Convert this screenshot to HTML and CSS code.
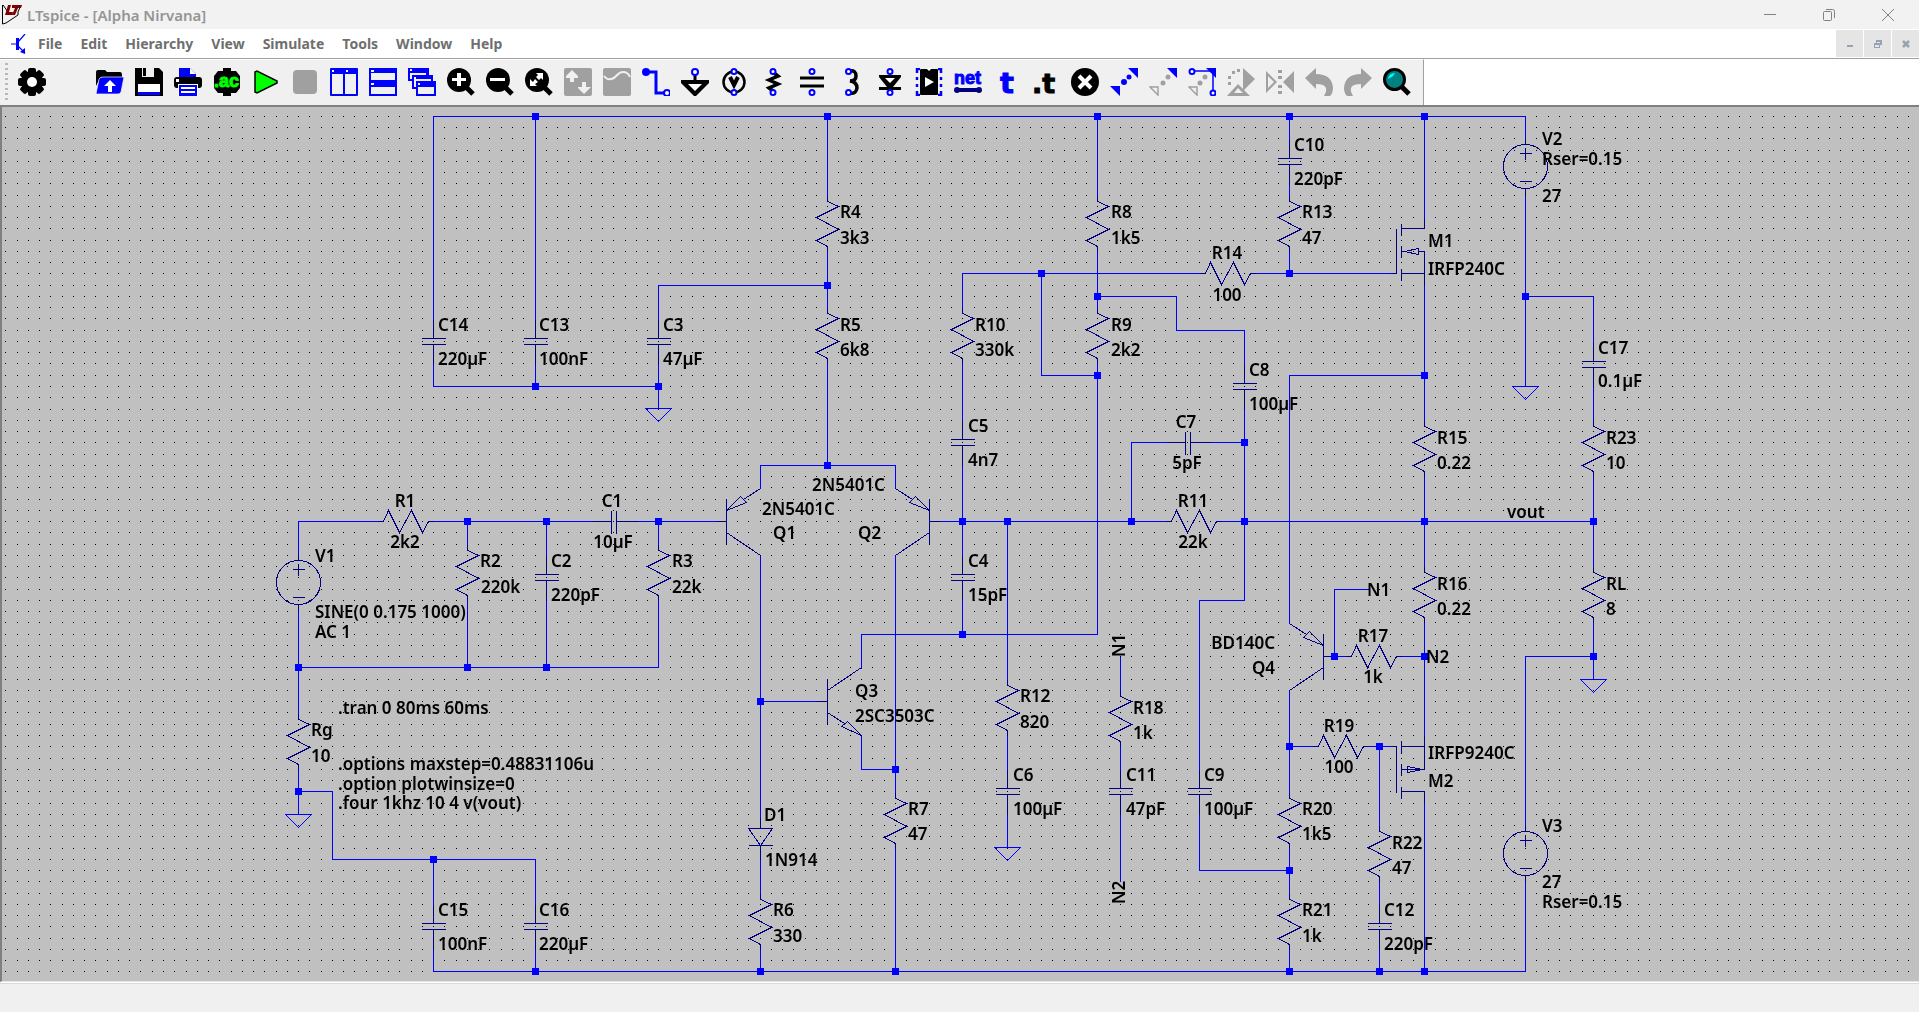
FILE: index.html
```html
<!DOCTYPE html>
<html lang="en">
<head>
<meta charset="utf-8">
<title>LTspice - [Alpha Nirvana]</title>
<link rel="stylesheet" href="styles.css">
<script src="grid.js" defer></script>
</head>
<body>
<header class="titlebar">
  <svg class="app-icon" viewBox="0 0 20 20" aria-hidden="true"><path d="M.5 0V19L4 18L16 10V7L19 0" fill="none" stroke="#000" stroke-width="1"/><path d="M1 0L6 7" stroke="#000"/><path d="M6 0H9L7 7H11L10 10H3ZM10 0H20L19 3H16L13 10H10L13 3H10Z" fill="#800000"/></svg>
  <h1 class="title">LTspice - [Alpha Nirvana]</h1>
  <div class="window-buttons">
    <button class="window-button" aria-label="Minimize"><svg width="14" height="14" viewBox="0 0 14 14"><path d="M1 6.500H13" class="thin"/></svg></button>
    <button class="window-button" aria-label="Restore"><svg width="14" height="14" viewBox="0 0 14 14"><rect x="1.500" y="3.500" width="8" height="9" rx="1" class="thin"/><path d="M4 1.500H10.500Q12.500 1.500 12.500 3.500V10" class="thin"/></svg></button>
    <button class="window-button" aria-label="Close"><svg width="14" height="14" viewBox="0 0 14 14"><path d="M1 1L13 13M13 1L1 13" class="thin"/></svg></button>
  </div>
</header>

<nav class="menubar" aria-label="Main menu">
  <svg class="doc-icon" viewBox="0 0 16 20" aria-hidden="true"><path d="M0 10H7M7 8L14 0M7 12L14 19" stroke="#00f" stroke-width="1.200" fill="none"/><path d="M5 4H8V16H5ZM9 18L14 20V14Z" fill="#00f"/></svg>
  <button class="menu">File</button>
  <button class="menu">Edit</button>
  <button class="menu">Hierarchy</button>
  <button class="menu">View</button>
  <button class="menu">Simulate</button>
  <button class="menu">Tools</button>
  <button class="menu">Window</button>
  <button class="menu">Help</button>
  <div class="child-buttons">
    <button class="child-button" aria-label="Minimize document"><svg width="10" height="10" viewBox="0 0 10 10"><path d="M2 6H8V8H2Z"/></svg></button>
    <button class="child-button" aria-label="Restore document"><svg width="10" height="10" viewBox="0 0 10 10"><path d="M3 1H9V6H7V3H4V4H3ZM1 4H7V9H1ZM2 6V8H6V6Z" fill-rule="evenodd"/></svg></button>
    <button class="child-button" aria-label="Close document"><svg width="10" height="10" viewBox="0 0 10 10"><path d="M2 2L8 8M8 2L2 8" stroke="#95a3b3" stroke-width="2.500"/></svg></button>
  </div>
</nav>

<div class="toolbar-row">
  <div class="toolbar" role="toolbar" aria-label="Main toolbar">
    <span class="grip"></span>
    <button class="tool settings" aria-label="Settings"><svg viewBox="0 0 28 28"><circle cx="14" cy="14" r="11"/><rect x="10" y="0" width="8" height="28" rx="2"/><rect x="10" y="0" width="8" height="28" rx="2" transform="rotate(45 14 14)"/><rect x="10" y="0" width="8" height="28" rx="2" transform="rotate(90 14 14)"/><rect x="10" y="0" width="8" height="28" rx="2" transform="rotate(135 14 14)"/><circle cx="14" cy="14" r="5" fill="#fff"/></svg></button>
    <button class="tool" aria-label="Open"><svg viewBox="0 0 28 28"><path d="M0 18V4Q0 2 2 2H9L11 4H24Q26 4 26 7V9H6Q4 9 3 12Z"/><path d="M3 11Q4 9 7 9H28L25 24Q24 26 22 26H0Z" fill="#00f" stroke="#f0f0f0" stroke-width=".7"/><path d="M14 12L20 18H16V24H12V18H8Z" fill="#fff"/></svg></button>
    <button class="tool" aria-label="Save"><svg viewBox="0 0 28 28"><path d="M0 0H7V9H19V0H24L28 4V28H0Z"/><path d="M8 0H11V8H8Z"/><path d="M3 16H25V24H3Z" fill="#fff"/><path d="M3 24H25V27H3Z" fill="#00f"/></svg></button>
    <button class="tool" aria-label="Print"><svg viewBox="0 0 28 28"><path d="M5 0H16L22 6V9H5Z" fill="#00f"/><path d="M16 0V6H22Z" fill="#fff"/><rect x="0" y="9" width="28" height="11" rx="3"/><path d="M2 11H5V14H2Z" fill="#fff"/><path d="M4 16H24V28H4Z" fill="#fff"/><path d="M5 17H23V28H5Z" fill="#00f"/><path d="M7 19H21V21H7ZM7 23H21V25H7Z" fill="#fff"/></svg></button>
    <button class="tool" aria-label="AC analysis"><svg viewBox="0 0 28 28"><path d="M10 0H18V3H23L27 8V20L23 25H18V28H10V25H5L1 20V8L5 3H10Z"/><text x="1" y="19" class="icon-word" font-size="18" fill="#0f0" stroke="#0f0">.ac</text></svg></button>
    <button class="tool" aria-label="Run"><svg viewBox="0 0 28 28"><path d="M3 4L5 3L25 13V15L5 25L3 24Z" fill="#0f0" stroke="#000" stroke-width="1.500"/></svg></button>
    <button class="tool" aria-label="Halt" disabled><svg viewBox="0 0 28 28"><rect x="2" y="2" width="24" height="24" rx="4" fill="#a0a0a0"/></svg></button>
    <button class="tool" aria-label="Tile vertically"><svg viewBox="0 0 28 28"><rect width="28" height="28" rx="1" fill="#00f"/><path d="M2 6H13V26H2ZM15 6H26V26H15ZM2 2H4V4H2ZM16 2H18V4H16Z" fill="#f0f0f0"/></svg></button>
    <button class="tool" aria-label="Tile horizontally"><svg viewBox="0 0 28 28"><path d="M0 0H28V28H0Z" fill="#00f"/><path d="M2 5H26V12H2ZM2 19H26V26H2ZM2 2H5V4H2ZM2 15H5V17H2Z" fill="#f0f0f0"/></svg></button>
    <button class="tool" aria-label="Cascade"><svg viewBox="0 0 28 28"><path d="M0 0H21V7H25V13H28V28H8V21H4V13H0Z" fill="#00f"/><path d="M2 5H18V7H4V11H2ZM6 11H23V13H8V19H6ZM10 19H26V26H10ZM2 1H4V3H2ZM6 9H8V11H6ZM10 15H12V17H10Z" fill="#f0f0f0"/></svg></button>
    <button class="tool" aria-label="Zoom in"><svg viewBox="0 0 28 28"><circle cx="12" cy="12" r="12"/><path d="M18 18L26 26" stroke="#000" stroke-width="5"/><path d="M10 5H14V10H19V13H14V18H10V13H5V10H10Z" fill="#fff"/></svg></button>
    <button class="tool" aria-label="Zoom out"><svg viewBox="0 0 28 28"><circle cx="12" cy="12" r="12"/><path d="M18 18L26 26" stroke="#000" stroke-width="5"/><path d="M4 10H19V13H4Z" fill="#fff"/></svg></button>
    <button class="tool" aria-label="Zoom to fit"><svg viewBox="0 0 28 28"><circle cx="12" cy="12" r="12"/><path d="M18 18L26 26" stroke="#000" stroke-width="5"/><path d="M11 5H18V12L16 10L14 12L11 9L13 7ZM5 11L8 14L10 11L13 14L10 16L12 18H5Z" fill="#fff"/></svg></button>
    <button class="tool" aria-label="Autorange" disabled><svg viewBox="0 0 28 28"><rect width="28" height="28" rx="2" fill="#a0a0a0"/><path d="M8 2L14 8V10H10V14H6V10H2V8ZM18 14H22V19H27L20 26L14 20V19H18Z" fill="#f0f0f0"/></svg></button>
    <button class="tool" aria-label="Plot" disabled><svg viewBox="0 0 28 28"><rect width="28" height="28" rx="2" fill="#a0a0a0"/><path d="M1 8Q4 12 8 11C13 11 14 4 20 4Q25 4 27 9" fill="none" stroke="#f0f0f0" stroke-width="2"/></svg></button>
    <button class="tool" aria-label="Wire"><svg viewBox="0 0 28 28"><path d="M4 4H14V25H23" fill="none" stroke="#00f" stroke-width="3"/><circle cx="4" cy="4" r="4" fill="#00f"/><circle cx="25" cy="25" r="3" class="pin"/></svg></button>
    <button class="tool" aria-label="Ground"><svg viewBox="0 0 28 28"><path d="M14 6V14" stroke="#000" stroke-width="3"/><path d="M0 12H28V15L15 28H13L0 15Z"/><path d="M7 16H21L14 23Z" fill="#fff"/><circle cx="14" cy="4" r="3" class="pin"/></svg></button>
    <button class="tool" aria-label="Voltage source"><svg viewBox="0 0 28 28"><circle cx="14" cy="14" r="10.500" fill="none" stroke="#000" stroke-width="2.500"/><path d="M10 9L14 17L18 9" fill="none" stroke="#000" stroke-width="4"/><circle cx="14" cy="3.500" r="2.500" class="pin"/><circle cx="14" cy="24.500" r="2.500" class="pin"/></svg></button>
    <button class="tool" aria-label="Resistor"><svg viewBox="0 0 28 28"><path d="M15 5L19 8L10 12L19 16L10 20L14 23" fill="none" stroke="#000" stroke-width="3.500"/><circle cx="14" cy="3.500" r="2.500" class="pin"/><circle cx="14" cy="24.500" r="2.500" class="pin"/></svg></button>
    <button class="tool" aria-label="Capacitor"><svg viewBox="0 0 28 28"><path d="M2 10H26M2 18H26" stroke="#000" stroke-width="3"/><circle cx="14" cy="3.500" r="2.500" class="pin"/><circle cx="14" cy="24.500" r="2.500" class="pin"/></svg></button>
    <button class="tool" aria-label="Inductor"><svg viewBox="0 0 28 28"><path d="M13 3Q19 2 19 8Q19 13 13 13Q20 14 20 20Q19 26 14 25" fill="none" stroke="#000" stroke-width="3.500"/><circle cx="11.500" cy="3.500" r="2.500" class="pin"/><circle cx="11.500" cy="24.500" r="2.500" class="pin"/></svg></button>
    <button class="tool" aria-label="Diode"><svg viewBox="0 0 28 28"><path d="M3 7H25V9L17 19H25V22H3V19H11L3 9Z"/><path d="M9 10H19L14 15Z" fill="#fff"/><circle cx="14" cy="3.500" r="2.500" class="pin"/><circle cx="14" cy="24.500" r="2.500" class="pin"/></svg></button>
    <button class="tool" aria-label="Component"><svg viewBox="0 0 28 28"><rect x="5" y="1" width="18" height="26" rx="1"/><path d="M11 0H17L14 3ZM10 9V19L19 14Z" fill="#fff"/><path d="M2 5V1H5M23 1H26V5M2 9V12M26 9V12M2 16V19M26 16V19M2 23V27H5M23 27H26V23" fill="none" stroke="#00f" stroke-width="2.500"/></svg></button>
    <button class="tool" aria-label="Label net"><svg viewBox="0 0 28 28"><text x="0" y="16" class="icon-word" font-size="18" fill="#00f" stroke="#00f">net</text><path d="M3 22H25" stroke="#000080" stroke-width="4"/><circle cx="3" cy="22" r="3" fill="#000080"/><circle cx="25" cy="22" r="3" fill="#000080"/></svg></button>
    <button class="tool" aria-label="Text"><svg viewBox="0 0 28 28"><text x="7" y="25" class="icon-letter" font-size="29" fill="#00f" stroke="#00f">t</text></svg></button>
    <button class="tool" aria-label="SPICE directive"><svg viewBox="0 0 28 28"><text x="0" y="25" class="icon-letter" font-size="27" stroke="#000">.t</text></svg></button>
    <button class="tool" aria-label="Delete"><svg viewBox="0 0 28 28"><circle cx="14" cy="14" r="14"/><path d="M8 8L20 20M20 8L8 20" stroke="#fff" stroke-width="4"/></svg></button>
    <button class="tool" aria-label="Move"><svg viewBox="0 0 28 28"><path d="M18 0H28V10ZM0 18H10V28Z" fill="#00f"/><circle cx="8" cy="20" r="2" fill="#00f"/><circle cx="14" cy="14" r="3" fill="#00f"/><circle cx="19" cy="9" r="2.500" fill="#00f"/></svg></button>
    <button class="tool" aria-label="Duplicate"><svg viewBox="0 0 28 28"><path d="M18 0H28V10Z" fill="#00f"/><path d="M1 19H9V27Z" fill="none" stroke="#a0a0a0" stroke-width="1.500"/><circle cx="14" cy="15" r="2.500" fill="#a0a0a0"/><circle cx="19" cy="9" r="2.500" fill="#a0a0a0"/></svg></button>
    <button class="tool" aria-label="Drag"><svg viewBox="0 0 28 28"><path d="M18 0H28V10Z" fill="#00f"/><path d="M1 19H9V27Z" fill="none" stroke="#a0a0a0" stroke-width="1.500"/><circle cx="12" cy="15" r="2.500" fill="#a0a0a0"/><circle cx="17" cy="9" r="2.500" fill="#a0a0a0"/><path d="M6 3H25V22" fill="none" stroke="#00f" stroke-width="1.500"/><circle cx="4" cy="3.500" r="2.500" class="pin"/><circle cx="25" cy="25" r="2.500" class="pin"/></svg></button>
    <button class="tool" aria-label="Rotate" disabled><svg viewBox="0 0 28 28"><g fill="#a0a0a0"><path d="M16 0L28 11L16 23Z"/><path d="M11 16L23 28H0ZM11 20L7 25H16Z" fill-rule="evenodd"/><path d="M10 1H13V4H10ZM5 3H8V6H5ZM1 8H4V11H1ZM1 14H4V17H1Z"/></g></svg></button>
    <button class="tool" aria-label="Mirror" disabled><svg viewBox="0 0 28 28"><g fill="#a0a0a0"><path d="M28 3V25L17 14ZM0 3L11 14L0 25ZM2 8V20L8 14Z" fill-rule="evenodd"/><path d="M12 2H16V5H12ZM12 8H16V11H12ZM12 17H16V20H12ZM12 23H16V26H12Z"/></g></svg></button>
    <button class="tool" aria-label="Undo" disabled><svg viewBox="0 0 28 28"><path d="M11 0V6Q27 6 28 20Q28 25 25 28H19Q26 16 11 16V21L0 10Z" fill="#a0a0a0"/></svg></button>
    <button class="tool" aria-label="Redo" disabled><svg viewBox="0 0 28 28"><path d="M17 0V6Q1 6 0 20Q0 25 3 28H9Q2 16 17 16V21L28 10Z" fill="#a0a0a0"/></svg></button>
    <button class="tool" aria-label="Search"><svg viewBox="0 0 28 28"><path d="M18 18L26 26" stroke="#000" stroke-width="5"/><circle cx="11.500" cy="11.500" r="10" fill="#008080" stroke="#000" stroke-width="3"/><path d="M5 11Q6 5 12 5L10 8L7 10Z" fill="#0ff"/></svg></button>
  </div>
</div>

<main class="workspace">
  <canvas class="grid"></canvas>
  <svg class="schematic" width="1917" height="874" viewBox="2 107 1917 874" role="img" aria-label="Alpha Nirvana amplifier schematic">
    <defs>
      <path id="res" d="M0 0V6L11 11L-11 22L11 34L-11 45L0 51V56"/>
      <path id="cap" d="M0 0V19M-12 19H12M-12 25H12M0 25V45"/>
      <path id="hcap" d="M0 0H19M19 -11V12M24 -11V12M24 0H45"/>
      <path id="src" d="M0 0V6M0 50V56M-6 15H6M0 9V21M-6 43H6M22 28A22 22 0 1 1 -22 28A22 22 0 1 1 22 28"/>
      <path id="pnp" d="M0 -23V22M-11 0H0M0 11L34 34M34 -33L17 -22M14 -25L20 -19L0 -11Z"/>
      <path id="npn" d="M0 -23V22M-11 0H0M0 -11L34 -34M0 11L17 22M20 20L14 25L34 34Z"/>
      <path id="gnd" d="M-13 0H13L0 13Z"/>
      <path id="dot" d="M-4 -4H3V3H-4Z"/>
    </defs>
    <g transform="translate(.5 .5)" shape-rendering="crispEdges">
      <path class="wire" d="M433 319V116H1525V139M433 364V386H658M535 116V319M535 364V386M658 319V285H827M658 364V408M827 116V195M827 251V307M827 363V465M760 488V465H895V488
        M760 555V817M760 701H816M861 668V634H1097V363M861 735V769H895M895 555V792M895 848V971M760 859V893M760 949V971
        M298 554V521H378M433 521H592M636 521H715M298 610V713M298 667H658V600M467 521V544M467 600V667M546 521V555M546 600V667M658 521V544
        M298 769V814M298 791H332V859H535V904M433 859V904M433 949V971H1525V881M535 949V971
        M1097 116V195M1097 251V307M1199 273H962V307M1041 273V375H1097M962 363V420M962 465V555M962 600V634
        M1097 296H1176V330H1244V364M1244 409V600H1199V769M1199 814V870H1289M1131 521V442H1166M1210 442H1244M940 521H1165M1221 521H1593
        M1007 521V679M1007 735V769M1007 814V847M1120 656V690M1120 746V769M1120 814V881
        M1289 116V139M1289 184V195M1289 251V273M1255 273H1390M1424 375H1289V623M1289 690V792M1289 848V893M1289 949V971
        M1424 116V218M1424 285V420M1424 476V566M1424 622V735M1424 803V971M1368 589H1334V656H1345M1401 656H1424M1289 746H1312M1368 746H1390M1379 746V825M1379 881V904M1379 949V971
        M1525 195V386M1525 296H1593V342M1593 387V420M1593 476V566M1593 622V679M1525 825V656H1593"/>
      <g class="wire"><use href="#gnd" x="658" y="408"/><use href="#gnd" x="298" y="814"/><use href="#gnd" x="1007" y="847"/><use href="#gnd" x="1525" y="386"/><use href="#gnd" x="1593" y="679"/></g>
      <g class="part">
        <use href="#cap" x="433" y="319"/><use href="#cap" x="535" y="319"/><use href="#cap" x="658" y="319"/><use href="#cap" x="546" y="555"/><use href="#cap" x="433" y="904"/><use href="#cap" x="535" y="904"/>
        <use href="#cap" x="962" y="420"/><use href="#cap" x="962" y="555"/><use href="#cap" x="1007" y="769"/><use href="#cap" x="1120" y="769"/><use href="#cap" x="1199" y="769"/><use href="#cap" x="1244" y="364"/><use href="#cap" x="1289" y="139"/><use href="#cap" x="1379" y="904"/><use href="#cap" x="1593" y="342"/>
        <use href="#hcap" x="592" y="521"/><use href="#hcap" x="1166" y="442"/>
        <use href="#res" x="827" y="195"/><use href="#res" x="827" y="307"/><use href="#res" x="467" y="544"/><use href="#res" x="658" y="544"/><use href="#res" x="298" y="713"/><use href="#res" x="760" y="893"/><use href="#res" x="895" y="792"/><use href="#res" x="1097" y="195"/><use href="#res" x="1097" y="307"/><use href="#res" x="962" y="307"/><use href="#res" x="1007" y="679"/><use href="#res" x="1120" y="690"/><use href="#res" x="1289" y="195"/><use href="#res" x="1289" y="792"/><use href="#res" x="1289" y="893"/><use href="#res" x="1379" y="825"/><use href="#res" x="1424" y="420"/><use href="#res" x="1424" y="566"/><use href="#res" x="1593" y="420"/><use href="#res" x="1593" y="566"/>
        <use href="#res" transform="translate(377 521) rotate(-90)"/><use href="#res" transform="translate(1199 273) rotate(-90)"/><use href="#res" transform="translate(1165 521) rotate(-90)"/><use href="#res" transform="translate(1345 656) rotate(-90)"/><use href="#res" transform="translate(1312 746) rotate(-90)"/>
        <use href="#src" x="298" y="554"/><use href="#src" x="1525" y="138"/><use href="#src" x="1525" y="825"/>
        <use href="#pnp" x="726" y="521"/><use href="#pnp" transform="translate(929 521) scale(-1 1)"/><use href="#pnp" transform="translate(1323 656) scale(-1 1)"/><use href="#npn" x="827" y="701"/>
        <path d="M760 817V828M748 828H772L760 845ZM748 845H772M760 845V859"/>
        <path d="M1390 273H1396V228M1401 223V235M1401 245V257M1401 268V280M1424 218V228H1401M1401 273H1424M1401 251H1404M1424 285V251H1418M1404 251L1418 248V254Z"/>
        <path d="M1390 746H1396V792M1401 740V753M1401 763V775M1401 786V798M1401 746H1424M1424 735V769H1401M1407 766V772L1422 769ZM1401 791H1424V803"/>
      </g>
      <g class="junction">
        <use href="#dot" x="535" y="116"/><use href="#dot" x="827" y="116"/><use href="#dot" x="1097" y="116"/><use href="#dot" x="1289" y="116"/><use href="#dot" x="1424" y="116"/>
        <use href="#dot" x="827" y="285"/><use href="#dot" x="535" y="386"/><use href="#dot" x="658" y="386"/><use href="#dot" x="827" y="465"/><use href="#dot" x="467" y="521"/><use href="#dot" x="546" y="521"/><use href="#dot" x="658" y="521"/>
        <use href="#dot" x="298" y="667"/><use href="#dot" x="467" y="667"/><use href="#dot" x="546" y="667"/><use href="#dot" x="298" y="791"/><use href="#dot" x="433" y="859"/><use href="#dot" x="535" y="971"/><use href="#dot" x="760" y="971"/><use href="#dot" x="895" y="971"/>
        <use href="#dot" x="760" y="701"/><use href="#dot" x="895" y="769"/><use href="#dot" x="962" y="634"/><use href="#dot" x="962" y="521"/><use href="#dot" x="1007" y="521"/><use href="#dot" x="1131" y="521"/><use href="#dot" x="1244" y="521"/><use href="#dot" x="1424" y="521"/><use href="#dot" x="1593" y="521"/>
        <use href="#dot" x="1041" y="273"/><use href="#dot" x="1097" y="296"/><use href="#dot" x="1097" y="375"/><use href="#dot" x="1244" y="442"/><use href="#dot" x="1289" y="273"/><use href="#dot" x="1424" y="375"/><use href="#dot" x="1525" y="296"/>
        <use href="#dot" x="1334" y="656"/><use href="#dot" x="1424" y="656"/><use href="#dot" x="1593" y="656"/><use href="#dot" x="1289" y="746"/><use href="#dot" x="1379" y="746"/><use href="#dot" x="1289" y="870"/><use href="#dot" x="1289" y="971"/><use href="#dot" x="1379" y="971"/><use href="#dot" x="1424" y="971"/>
      </g>
    </g>
    <g class="label">
      <text x="438" y="331">C14</text><text x="438" y="365">220µF</text>
      <text x="539" y="331">C13</text><text x="539" y="365">100nF</text>
      <text x="663" y="331">C3</text><text x="663" y="365">47µF</text>
      <text x="840" y="218">R4</text><text x="840" y="244">3k3</text>
      <text x="840" y="331">R5</text><text x="840" y="356">6k8</text>
      <text x="405" y="507" class="mid">R1</text><text x="405" y="548" class="mid">2k2</text>
      <text x="315" y="562">V1</text><text x="315" y="618">SINE(0 0.175 1000)</text><text x="315" y="638">AC 1</text>
      <text x="480" y="567">R2</text><text x="481" y="593">220k</text>
      <text x="551" y="567">C2</text><text x="551" y="601">220pF</text>
      <text x="612" y="507" class="mid">C1</text><text x="613" y="548" class="mid">10µF</text>
      <text x="672" y="567">R3</text><text x="672" y="593">22k</text>
      <text x="338" y="714">.tran 0 80ms 60ms</text>
      <text x="311" y="736">Rg</text><text x="311" y="762">10</text>
      <text x="338" y="770">.options maxstep=0.48831106u</text><text x="338" y="790">.option plotwinsize=0</text><text x="338" y="809">.four 1khz 10 4 v(vout)</text>
      <text x="438" y="916">C15</text><text x="438" y="950">100nF</text>
      <text x="539" y="916">C16</text><text x="539" y="950">220µF</text>
      <text x="812" y="491">2N5401C</text><text x="762" y="515">2N5401C</text><text x="773" y="539">Q1</text><text x="858" y="539">Q2</text>
      <text x="855" y="697">Q3</text><text x="855" y="722">2SC3503C</text>
      <text x="764" y="821">D1</text><text x="765" y="866">1N914</text>
      <text x="773" y="916">R6</text><text x="773" y="942">330</text>
      <text x="908" y="815">R7</text><text x="908" y="840">47</text>
      <text x="968" y="432">C5</text><text x="968" y="466">4n7</text>
      <text x="968" y="567">C4</text><text x="968" y="601">15pF</text>
      <text x="975" y="331">R10</text><text x="975" y="356">330k</text>
      <text x="1111" y="218">R8</text><text x="1111" y="244">1k5</text>
      <text x="1111" y="331">R9</text><text x="1111" y="356">2k2</text>
      <text x="1227" y="259" class="mid">R14</text><text x="1227" y="301" class="mid">100</text>
      <text x="1294" y="151">C10</text><text x="1294" y="185">220pF</text>
      <text x="1302" y="218">R13</text><text x="1302" y="244">47</text>
      <text x="1249" y="376">C8</text><text x="1249" y="410">100µF</text>
      <text x="1186" y="428" class="mid">C7</text><text x="1187" y="469" class="mid">5pF</text>
      <text x="1193" y="507" class="mid">R11</text><text x="1193" y="548" class="mid">22k</text>
      <text x="1020" y="702">R12</text><text x="1020" y="728">820</text>
      <text x="1013" y="781">C6</text><text x="1013" y="815">100µF</text>
      <text x="1133" y="714">R18</text><text x="1133" y="739">1k</text>
      <text x="1126" y="781">C11</text><text x="1126" y="815">47pF</text>
      <text transform="translate(1125 657) rotate(-90)">N1</text><text transform="translate(1125 904) rotate(-90)">N2</text>
      <text x="1204" y="781">C9</text><text x="1204" y="815">100µF</text>
      <text x="1275" y="649" class="end">BD140C</text><text x="1275" y="674" class="end">Q4</text>
      <text x="1428" y="247">M1</text><text x="1428" y="275">IRFP240C</text>
      <text x="1542" y="145">V2</text><text x="1542" y="165">Rser=0.15</text><text x="1542" y="202">27</text>
      <text x="1598" y="354">C17</text><text x="1598" y="387">0.1µF</text>
      <text x="1437" y="444">R15</text><text x="1437" y="469">0.22</text>
      <text x="1606" y="444">R23</text><text x="1606" y="469">10</text>
      <text x="1507" y="518">vout</text>
      <text x="1437" y="590">R16</text><text x="1437" y="615">0.22</text>
      <text x="1606" y="590">RL</text><text x="1606" y="615">8</text>
      <text x="1367" y="596">N1</text><text x="1426" y="663">N2</text>
      <text x="1373" y="642" class="mid">R17</text><text x="1373" y="683" class="mid">1k</text>
      <text x="1339" y="732" class="mid">R19</text><text x="1339" y="773" class="mid">100</text>
      <text x="1428" y="759">IRFP9240C</text><text x="1428" y="787">M2</text>
      <text x="1302" y="815">R20</text><text x="1302" y="840">1k5</text>
      <text x="1302" y="916">R21</text><text x="1302" y="942">1k</text>
      <text x="1392" y="849">R22</text><text x="1392" y="874">47</text>
      <text x="1384" y="916">C12</text><text x="1384" y="950">220pF</text>
      <text x="1542" y="832">V3</text><text x="1542" y="888">27</text><text x="1542" y="908">Rser=0.15</text>
    </g>
  </svg>
</main>
<footer class="statusbar"></footer>
</body>
</html>
```
FILE: styles.css
```css
* {
  box-sizing: border-box;
}

body {
  margin: 0;
  min-height: 100vh;
  display: flex;
  flex-direction: column;
  background: #f0f0f0;
  font-family: "Noto Sans", "Open Sans", sans-serif;
  font-size: 14px;
  font-weight: 700;
  overflow: hidden;
}

button {
  margin: 0;
  padding: 0;
  border: 0;
  background: none;
  font: inherit;
  color: inherit;
  display: flex;
  align-items: center;
  justify-content: center;
}

.titlebar {
  height: 29px;
  display: flex;
  align-items: center;
  padding: 0 2px;
  background: #f2f2f2;
}

.app-icon {
  width: 20px;
  height: 20px;
}

.title {
  flex: 1;
  margin: 0 0 0 5px;
  font-size: 15px;
  font-weight: 600;
  color: #959595;
}

.window-buttons {
  display: flex;
}

.window-button {
  width: 59px;
  height: 29px;
}

.thin {
  fill: none;
  stroke: #808080;
  stroke-width: 1;
}

.menubar {
  height: 30px;
  display: flex;
  align-items: center;
  padding-left: 11px;
  background: #fff;
  border-bottom: 1px solid #a0a0a0;
  color: #6f6f6f;
}

.doc-icon {
  width: 16px;
  height: 20px;
  margin-right: 2px;
}

.menu {
  padding: 0 9px;
}

.child-buttons {
  margin-left: auto;
  display: flex;
  gap: 1px;
}

.child-button {
  width: 27px;
  height: 27px;
  background: #e5e5e5;
  fill: #95a3b3;
}

.toolbar-row {
  height: 46px;
  display: flex;
  background: #fff;
}

.toolbar {
  display: flex;
  align-items: center;
  padding: 0 7px 1px 0;
  background: #f0f0f0;
  border-top: 1px solid #fff;
  border-right: 1px solid #a0a0a0;
}

.grip {
  width: 3px;
  height: 38px;
  margin: 0 4px 0 5px;
  background: repeating-linear-gradient(#b8b8b8 0 2px, #f0f0f0 2px 5px);
}

.tool {
  width: 39px;
  height: 40px;
}

.tool svg {
  width: 28px;
  height: 28px;
}

.settings {
  margin-right: 39px;
}

.pin {
  fill: #fff;
  stroke: #00f;
  stroke-width: 2;
}

.icon-word {
  font-family: "Liberation Sans", sans-serif;
  font-weight: 700;
}

.icon-letter {
  font-family: "DejaVu Sans", sans-serif;
  font-weight: 700;
}

.workspace {
  flex: 1;
  position: relative;
  overflow: hidden;
  background: #c0c0c0;
  border-top: 2px solid #808080;
  border-left: 2px solid #808080;
  border-bottom: 1px solid #e3e3e3;
}

.grid {
  position: absolute;
  inset: 0;
}

.schematic {
  position: relative;
  display: block;
}

.wire {
  fill: none;
  stroke: #00f;
}

.part {
  fill: none;
  stroke: #000080;
}

.junction {
  fill: #00f;
}

.label {
  font-size: 17px;
  font-weight: 600;
  fill: #000;
}

.mid {
  text-anchor: middle;
}

.end {
  text-anchor: end;
}

.statusbar {
  height: 30px;
  background: #f0f0f0;
  border-top: 1px solid #fff;
  box-shadow: inset 0 1px #d9d9d9;
}
```
FILE: grid.js
```js
// Draws the snap grid behind the schematic, one black pixel per grid point.
const PITCH = 11.258;
const ORIGIN_X = 3.4;
const ORIGIN_Y = 8.8;

function drawGrid() {
  const canvas = document.querySelector(".grid");
  const area = canvas.parentElement;
  canvas.width = area.clientWidth;
  canvas.height = area.clientHeight;
  const ctx = canvas.getContext("2d");
  ctx.fillStyle = "#000";
  for (let y = ORIGIN_Y; y < canvas.height - 2; y += PITCH) {
    for (let x = ORIGIN_X; x < canvas.width; x += PITCH) {
      ctx.fillRect(Math.round(x), Math.round(y), 1, 1);
    }
  }
}

drawGrid();
window.addEventListener("resize", drawGrid);
```
